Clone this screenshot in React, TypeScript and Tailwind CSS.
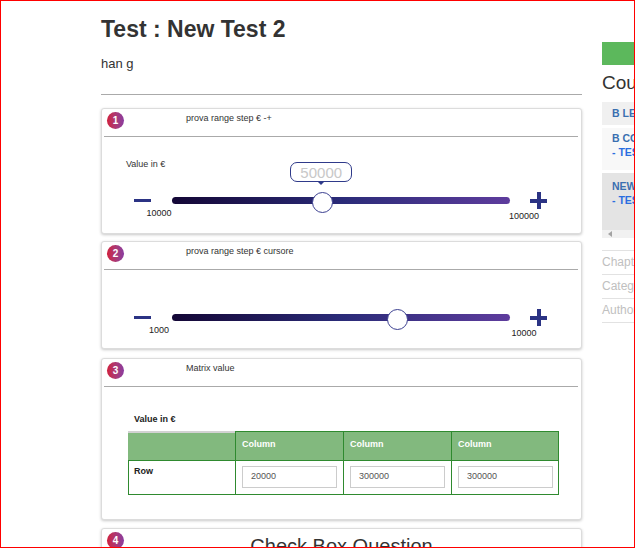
import React from "react";

const Badge = ({ n }: { n: number }) => (
  <div className="absolute left-[5px] top-[3px] w-[17px] h-[17px] rounded-full bg-gradient-to-r from-[#d01c3a] to-[#8a3ba0] flex items-center justify-center text-white text-[10px] font-bold leading-none">
    {n}
  </div>
);

const CardHeader = ({ n, title }: { n: number; title: string }) => (
  <>
    <div className="relative h-[27px]">
      <Badge n={n} />
      <div className="pl-[84px] pt-[1px] text-[9px] leading-[16px] text-[#333]">{title}</div>
    </div>
    <div className="ml-[2px] mr-[3px] border-t border-[#aaa]" />
  </>
);

const Slider = ({
  min,
  max,
  value,
  tooltip,
}: {
  min: number;
  max: number;
  value: number;
  tooltip?: boolean;
}) => {
  const pos = ((value - min) / (max - min)) * 338;
  return (
    <div className="flex items-center h-[17px] pl-[32px]">
      <div className="w-[17px] h-[3px] bg-[#2b3384]" />
      <div className="relative ml-[21px] w-[338px] h-[7px] rounded-full bg-gradient-to-r from-[#140736] via-[#2a2b78] to-[#5e3c9d]">
        <div className="absolute left-[-33px] top-[10px] w-[40px] text-center text-[9px] leading-[12px] text-[#222]">
          {min}
        </div>
        <div className="absolute left-[332px] top-[13px] w-[40px] text-center text-[9px] leading-[12px] text-[#222]">
          {max}
        </div>
        <div
          className="absolute top-[-5px] w-[21px] h-[21px] rounded-full bg-white border-[1.5px] border-[#3b3f90]"
          style={{ left: pos - 10.5 }}
        />
        {tooltip && (
          <div
            className="absolute top-[-35px] w-[62px] h-[20px] rounded-[7px] border-[1.5px] border-[#2f3a8a] bg-white flex items-center justify-center text-[15px] leading-none text-[#c8c8c8]"
            style={{ left: pos - 32 }}
          >
            {value}
            <div className="absolute left-1/2 -translate-x-1/2 bottom-[-4px] w-0 h-0 border-l-[3px] border-r-[3px] border-t-[3px] border-l-transparent border-r-transparent border-t-[#2f3a8a]" />
          </div>
        )}
      </div>
      <div className="relative ml-[20px] w-[17px] h-[17px]">
        <div className="absolute left-0 top-[6.5px] w-[17px] h-[4px] bg-[#2b3384]" />
        <div className="absolute top-0 left-[6.5px] w-[4px] h-[17px] bg-[#2b3384]" />
      </div>
    </div>
  );
};

const Card = ({ className, children }: { className: string; children: React.ReactNode }) => (
  <div
    className={`bg-white border border-[#dcdcdc] rounded-[3px] shadow-[0_1px_3px_rgba(0,0,0,0.22)] overflow-hidden ${className}`}
  >
    {children}
  </div>
);

const InputBox = ({ v }: { v: string }) => (
  <div className="ml-[6px] mt-[5px] w-[95px] h-[22px] border border-[#cccccc] bg-white pl-[8px] flex items-center text-[9px] text-[#555]">
    {v}
  </div>
);

export default function App() {
  return (
    <div
      className="w-[635px] h-[548px] border border-[#ff0000] overflow-hidden bg-white flex"
      style={{ fontFamily: '"Liberation Sans", Arial, sans-serif' }}
    >
      {/* Main column */}
      <div className="ml-[100px] w-[481px] shrink-0 pt-[15px]">
        <h1 className="text-[23px] leading-[26px] font-bold text-[#333]">Test : New Test 2</h1>
        <div className="mt-[14px] text-[13px] leading-[16px] text-[#333]">han g</div>
        <div className="mt-[22px] border-t border-[#aaa]" />

        {/* Card 1 */}
        <Card className="mt-[13px] h-[126px]">
          <CardHeader n={1} title="prova range step € -+" />
          <div className="mt-[21px] pl-[24px] text-[9px] leading-[12px] text-[#333]">Value in €</div>
          <div className="mt-[22px]">
            <Slider min={10000} max={100000} value={50000} tooltip />
          </div>
        </Card>

        {/* Card 2 */}
        <Card className="mt-[7px] h-[108px]">
          <CardHeader n={2} title="prova range step € cursore" />
          <div className="mt-[39px]">
            <Slider min={1000} max={10000} value={7000} />
          </div>
        </Card>

        {/* Card 3 */}
        <Card className="mt-[9px] h-[162px]">
          <CardHeader n={3} title="Matrix value" />
          <div className="mt-[26px] pl-[32px] text-[9px] leading-[12px] font-bold text-[#222]">Value in €</div>
          <div className="mt-[6px] ml-[26px] w-[431px]">
            <div className="flex h-[29px] bg-[#82b97e]">
              <div className="w-[107px] border-t-2 border-[#d2d2d2]" />
              {[0, 1, 2].map((i) => (
                <div
                  key={i}
                  className={`w-[108px] border-l border-t border-[#2f8a2f] pl-[6px] pt-[6px] text-[9px] leading-[12px] font-bold text-white ${
                    i === 2 ? "border-r" : ""
                  }`}
                >
                  Column
                </div>
              ))}
            </div>
            <div className="flex h-[35px]">
              <div className="w-[107px] border-l border-t border-b border-[#2f8a2f] pl-[5px] pt-[4px] text-[9px] leading-[12px] font-bold text-[#222]">
                Row
              </div>
              <div className="w-[108px] border-l border-t border-b border-[#2f8a2f]">
                <InputBox v="20000" />
              </div>
              <div className="w-[108px] border-l border-t border-b border-[#2f8a2f]">
                <InputBox v="300000" />
              </div>
              <div className="w-[108px] border-l border-t border-b border-r border-[#2f8a2f]">
                <InputBox v="300000" />
              </div>
            </div>
          </div>
        </Card>

        {/* Card 4 */}
        <Card className="mt-[8px] h-[80px] relative">
          <div className="relative h-[27px]">
            <Badge n={4} />
            <div className="pt-[5px] text-center text-[20px] leading-[24px] text-[#333]">Check Box Question</div>
          </div>
        </Card>
      </div>

      {/* Sidebar */}
      <div className="ml-[20px] w-[200px] shrink-0 pt-[41px]">
        <div className="h-[23px] bg-[#5cb85c]" />
        <div className="mt-[7px] text-[19px] leading-[22px] text-[#333] whitespace-nowrap">Course Content</div>
        <div className="mt-[8px] h-[23px] bg-[#f0f0f0] pl-[10px] pt-[5px] text-[10.5px] leading-[13px] font-bold text-[#3a6fb0] whitespace-nowrap">
          B LEARNING COURSE
        </div>
        <div className="mt-[3px] h-[42px] bg-[#f8f8f8] pl-[10px] pt-[3px] text-[10.5px] leading-[14px] font-bold whitespace-nowrap">
          <div className="text-[#3a6fb0]">B COURSE ONE</div>
          <div className="text-[#2a6ee0]">- TEST 1</div>
        </div>
        <div className="mt-[3px] h-[57px] bg-[#e4e4e4] pl-[10px] pt-[6px] text-[10.5px] leading-[14px] font-bold whitespace-nowrap">
          <div className="text-[#3a6fb0]">NEW COURSE</div>
          <div className="text-[#2a6ee0]">- TEST 2</div>
        </div>
        <div className="h-[8px] bg-[#f1f1f1] pl-[6px] flex items-center">
          <div className="w-0 h-0 border-t-[3px] border-b-[3px] border-r-[4px] border-t-transparent border-b-transparent border-r-[#a3a3a3]" />
        </div>
        <div className="mt-[12px] border-b border-[#e2e2e2]">
          {["Chapters", "Category", "Author"].map((t) => (
            <div key={t} className="border-t border-[#e2e2e2] h-[24px] text-[12px] leading-[22px] text-[#c0c0c0] whitespace-nowrap">
              {t}
            </div>
          ))}
        </div>
      </div>
    </div>
  );
}
